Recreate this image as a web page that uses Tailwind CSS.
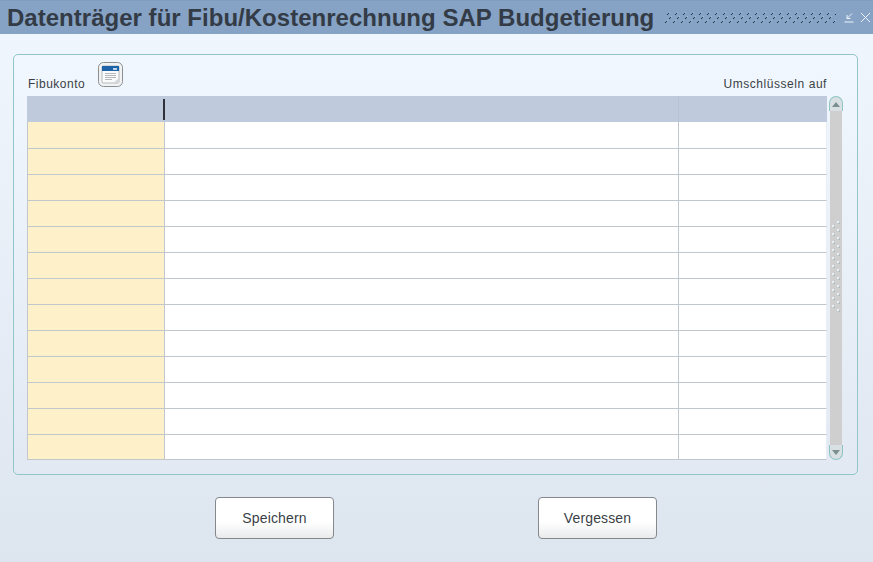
<!DOCTYPE html>
<html lang="de">
<head>
    <meta charset="UTF-8">
    <title>Datenträger für Fibu/Kostenrechnung SAP Budgetierung</title>
    <script src="https://cdn.jsdelivr.net/npm/@tailwindcss/browser@4"></script>
</head>
<body class="w-[873px] h-[562px] overflow-hidden font-['Liberation_Sans',Arial,sans-serif] bg-linear-to-b from-[#f1f7fe] to-[#dde5ef]">
    <!-- title bar -->
    <div class="h-[34px] bg-[#86a2c4] border-t border-[#7f9bbd] flex items-center pl-[7px] pr-[4px]">
        <h1 class="text-[24px] leading-[34px] font-bold text-[#333b46] tracking-[0.02px] whitespace-nowrap w-[657px] shrink-0">Datenträger für Fibu/Kostenrechnung SAP Budgetierung</h1>
        <svg class="w-[172px] h-[11px] shrink-0" viewBox="0 0 172 11">
            <defs>
                <pattern id="dots" width="8" height="11" patternUnits="userSpaceOnUse">
                    <rect x="5" y="0" width="1" height="1" fill="#a9bfd8"/>
                    <rect x="4" y="1" width="1" height="1" fill="#27405e"/>
                    <rect x="3" y="2" width="1" height="1" fill="#1a2e47"/>
                    <rect x="7" y="4" width="1" height="1" fill="#a9bfd8"/>
                    <rect x="6" y="5" width="1" height="1" fill="#27405e"/>
                    <rect x="5" y="6" width="1" height="1" fill="#1a2e47"/>
                    <rect x="3" y="8" width="1" height="1" fill="#a9bfd8"/>
                    <rect x="2" y="9" width="1" height="1" fill="#27405e"/>
                    <rect x="1" y="10" width="1" height="1" fill="#1a2e47"/>
                </pattern>
            </defs>
            <rect width="172" height="11" fill="url(#dots)"/>
        </svg>
        <svg class="w-[11px] h-[11px] ml-[8px] shrink-0" viewBox="0 0 11 11" fill="none" stroke="#eef3f9" stroke-width="1">
            <path d="M8 1.5 L3 6.5 M3 3 V6.5 H6.5 M0.5 10 H9.5"/>
        </svg>
        <svg class="w-[11px] h-[11px] ml-[5px] shrink-0" viewBox="0 0 11 11" fill="none" stroke="#eef3f9" stroke-width="1">
            <path d="M1 1 L10 10 M10 1 L1 10"/>
        </svg>
    </div>

    <div class="px-[13px] pt-[20px]">
        <!-- panel -->
        <div class="h-[421px] w-[845px] border border-[#92c6ca] rounded-[5px] pl-[13px] pr-[14px] bg-linear-to-b from-[#f1f7fe] to-[#e2e9f2]">
            <div class="h-[41px] flex items-end text-[12px] leading-[14px] text-[#3a3f46] tracking-[0.5px]">
                <span class="pb-[5px] ml-[1px]">Fibukonto</span>
                <svg class="w-[25px] h-[25px] ml-[13px] mb-[9px] shrink-0" viewBox="0 0 25 25">
                    <rect x="0.5" y="0.5" width="24" height="24" rx="5" fill="#f1f2f3" stroke="#8b8f90"/>
                    <rect x="4" y="4" width="17" height="17" rx="1" fill="#fafbfb" stroke="#b5babc"/>
                    <rect x="4" y="4" width="17" height="5" fill="#1e63a8"/>
                    <rect x="15" y="6" width="4" height="2" fill="#b9d3ea"/>
                    <path d="M7 11.5 H18 M7 13.5 H18 M7 15.5 H18 M7 17.5 H14" stroke="#b4b8bb"/>
                    <path d="M15 21 L21 16 V21 Z" fill="#d5d8da"/>
                </svg>
                <span class="ml-auto pb-[5px] mr-[16px] tracking-[0.55px]">Umschlüsseln auf</span>
            </div>
            <div class="flex gap-[2px]">
                <!-- table -->
                <div class="w-[800px]">
                    <div class="h-[26px] grid grid-cols-[137px_515px_148px] bg-[#bfcbdd]">
                        <div class="relative"><span class="absolute right-[-1px] top-[3px] w-[2px] h-[21px] bg-[#2f3238]"></span></div>
                        <div class="border-r border-[#b8c4d5]"></div>
                        <div></div>
                    </div>
                    <div class="h-[27px] grid grid-cols-[137px_514px_147px] border border-[#c0c8ce] border-t-0 border-r-[#e8eef5]"><div class="bg-[#fef0c9] border-r border-[#c0c8ce]"></div><div class="bg-white border-r border-[#c0c8ce]"></div><div class="bg-white"></div></div>
                    <div class="h-[26px] grid grid-cols-[137px_514px_147px] border border-[#c0c8ce] border-t-0 border-r-[#e8eef5]"><div class="bg-[#fef0c9] border-r border-[#c0c8ce]"></div><div class="bg-white border-r border-[#c0c8ce]"></div><div class="bg-white"></div></div>
                    <div class="h-[26px] grid grid-cols-[137px_514px_147px] border border-[#c0c8ce] border-t-0 border-r-[#e8eef5]"><div class="bg-[#fef0c9] border-r border-[#c0c8ce]"></div><div class="bg-white border-r border-[#c0c8ce]"></div><div class="bg-white"></div></div>
                    <div class="h-[26px] grid grid-cols-[137px_514px_147px] border border-[#c0c8ce] border-t-0 border-r-[#e8eef5]"><div class="bg-[#fef0c9] border-r border-[#c0c8ce]"></div><div class="bg-white border-r border-[#c0c8ce]"></div><div class="bg-white"></div></div>
                    <div class="h-[26px] grid grid-cols-[137px_514px_147px] border border-[#c0c8ce] border-t-0 border-r-[#e8eef5]"><div class="bg-[#fef0c9] border-r border-[#c0c8ce]"></div><div class="bg-white border-r border-[#c0c8ce]"></div><div class="bg-white"></div></div>
                    <div class="h-[26px] grid grid-cols-[137px_514px_147px] border border-[#c0c8ce] border-t-0 border-r-[#e8eef5]"><div class="bg-[#fef0c9] border-r border-[#c0c8ce]"></div><div class="bg-white border-r border-[#c0c8ce]"></div><div class="bg-white"></div></div>
                    <div class="h-[26px] grid grid-cols-[137px_514px_147px] border border-[#c0c8ce] border-t-0 border-r-[#e8eef5]"><div class="bg-[#fef0c9] border-r border-[#c0c8ce]"></div><div class="bg-white border-r border-[#c0c8ce]"></div><div class="bg-white"></div></div>
                    <div class="h-[26px] grid grid-cols-[137px_514px_147px] border border-[#c0c8ce] border-t-0 border-r-[#e8eef5]"><div class="bg-[#fef0c9] border-r border-[#c0c8ce]"></div><div class="bg-white border-r border-[#c0c8ce]"></div><div class="bg-white"></div></div>
                    <div class="h-[26px] grid grid-cols-[137px_514px_147px] border border-[#c0c8ce] border-t-0 border-r-[#e8eef5]"><div class="bg-[#fef0c9] border-r border-[#c0c8ce]"></div><div class="bg-white border-r border-[#c0c8ce]"></div><div class="bg-white"></div></div>
                    <div class="h-[26px] grid grid-cols-[137px_514px_147px] border border-[#c0c8ce] border-t-0 border-r-[#e8eef5]"><div class="bg-[#fef0c9] border-r border-[#c0c8ce]"></div><div class="bg-white border-r border-[#c0c8ce]"></div><div class="bg-white"></div></div>
                    <div class="h-[26px] grid grid-cols-[137px_514px_147px] border border-[#c0c8ce] border-t-0 border-r-[#e8eef5]"><div class="bg-[#fef0c9] border-r border-[#c0c8ce]"></div><div class="bg-white border-r border-[#c0c8ce]"></div><div class="bg-white"></div></div>
                    <div class="h-[26px] grid grid-cols-[137px_514px_147px] border border-[#c0c8ce] border-t-0 border-r-[#e8eef5]"><div class="bg-[#fef0c9] border-r border-[#c0c8ce]"></div><div class="bg-white border-r border-[#c0c8ce]"></div><div class="bg-white"></div></div>
                    <div class="h-[25px] grid grid-cols-[137px_514px_147px] border border-[#c0c8ce] border-t-0 border-r-[#e8eef5]"><div class="bg-[#fef0c9] border-r border-[#c0c8ce]"></div><div class="bg-white border-r border-[#c0c8ce]"></div><div class="bg-white"></div></div>
                </div>
                <!-- scrollbar -->
                <div class="w-[14px] h-[364px] flex flex-col items-center">
                    <div class="w-[14px] h-[15px] border border-b-0 border-[#8fc4c4] rounded-t-[7px] bg-[#d9e0e3] flex items-center justify-center">
                        <svg class="w-[8px] h-[5px]" viewBox="0 0 8 5"><path d="M4 0 L8 5 H0 Z" fill="#7b8f90"/></svg>
                    </div>
                    <div class="w-[12px] flex-1 bg-[#cfcfcf] flex items-center justify-center pb-[22px]">
                        <svg class="w-[10px] h-[92px]" viewBox="0 0 10 92">
                            <defs>
                                <pattern id="grip" width="10" height="8" patternUnits="userSpaceOnUse">
                                    <rect x="7" y="1" width="2" height="2" fill="#b5bfc1"/>
                                    <rect x="6" y="0" width="2" height="2" fill="#e8f1f3"/>
                                    <rect x="2" y="5" width="2" height="2" fill="#b5bfc1"/>
                                    <rect x="1" y="4" width="2" height="2" fill="#e8f1f3"/>
                                </pattern>
                            </defs>
                            <rect width="10" height="92" fill="url(#grip)"/>
                        </svg>
                    </div>
                    <div class="w-[14px] h-[15px] border border-t-0 border-[#8fc4c4] rounded-b-[7px] bg-[#d9e0e3] flex items-center justify-center">
                        <svg class="w-[8px] h-[5px]" viewBox="0 0 8 5"><path d="M4 5 L8 0 H0 Z" fill="#7b8f90"/></svg>
                    </div>
                </div>
            </div>
        </div>
    </div>

    <!-- buttons -->
    <div class="pt-[22px] pl-[215px] flex gap-[204px]">
        <button class="w-[119px] h-[42px] pt-[1px] border border-[#85888c] rounded-[4px] bg-linear-to-b from-white from-60% to-[#e9eaeb] text-[14px] text-[#3a3f46] tracking-[0.15px]">Speichern</button>
        <button class="w-[119px] h-[42px] pt-[1px] border border-[#85888c] rounded-[4px] bg-linear-to-b from-white from-60% to-[#e9eaeb] text-[14px] text-[#3a3f46] tracking-[0.15px]">Vergessen</button>
    </div>
</body>
</html>
